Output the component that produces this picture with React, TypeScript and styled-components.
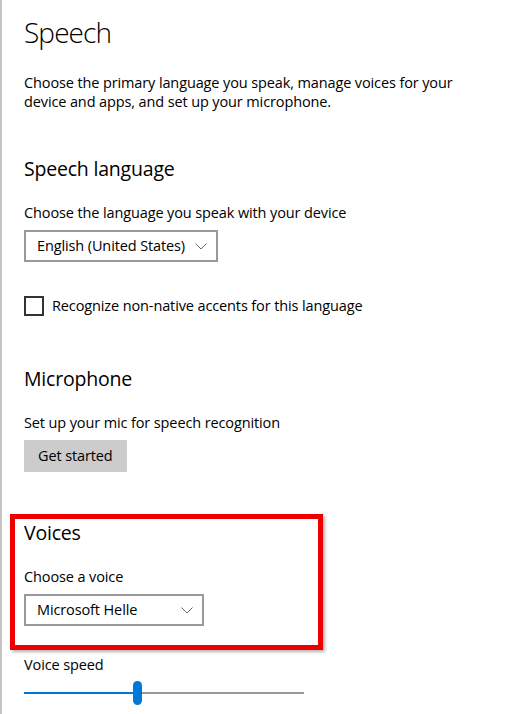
import React from "react";
import styled, { createGlobalStyle } from "styled-components";

const Global = createGlobalStyle`
  html, body {
    margin: 0;
    padding: 0;
    background: #ffffff;
  }
  body {
    font-family: "Open Sans", "Noto Sans", "Liberation Sans", sans-serif;
    color: #000000;
  }
`;

const Page = styled.div`
  box-sizing: border-box;
  min-height: 714px;
  border-left: 2px solid #c4c4c4;
  padding: 14px 0 0 22px;
  display: flex;
  flex-direction: column;
  align-items: flex-start;
`;

const Title = styled.h1`
  margin: 0;
  font-size: 28px;
  line-height: 36px;
  font-weight: 300;
  letter-spacing: -0.9px;
`;

const Text = styled.p<{ $mt: number }>`
  margin: ${(p) => p.$mt}px 0 0 0;
  font-size: 14.5px;
  letter-spacing: -0.12px;
  line-height: 19px;
  font-weight: 400;
`;

const Description = styled(Text)`
  max-width: 450px;
`;

const Heading = styled.h2<{ $mt: number }>`
  margin: ${(p) => p.$mt}px 0 0 0;
  font-size: 19.5px;
  letter-spacing: -0.2px;
  line-height: 28px;
  font-weight: 400;
`;

const Select = styled.div<{ $mt: number }>`
  box-sizing: border-box;
  margin-top: ${(p) => p.$mt}px;
  min-width: 180px;
  height: 32px;
  border: 2px solid #999999;
  padding: 0 9px 0 11px;
  display: inline-flex;
  align-items: center;
  justify-content: space-between;
  gap: 10px;
  font-size: 14.5px;
  letter-spacing: -0.12px;
  line-height: 20px;
  background: #ffffff;
`;

const Chevron = () => (
  <svg width="12" height="7" viewBox="0 0 12 7" fill="none">
    <path d="M0.5 0.5 L6 6 L11.5 0.5" stroke="#6b6b6b" strokeWidth="1" />
  </svg>
);

const CheckRow = styled.label<{ $mt: number }>`
  margin-top: ${(p) => p.$mt}px;
  display: flex;
  align-items: center;
  gap: 8px;
  font-size: 14.5px;
  letter-spacing: -0.12px;
  line-height: 20px;
`;

const Box = styled.span`
  box-sizing: border-box;
  width: 20px;
  height: 20px;
  border: 2px solid #333333;
  background: #ffffff;
`;

const Button = styled.button<{ $mt: number }>`
  margin-top: ${(p) => p.$mt}px;
  height: 32px;
  padding: 0 14px;
  border: none;
  background: #cccccc;
  font-family: inherit;
  font-size: 14.5px;
  letter-spacing: -0.12px;
  line-height: 20px;
  color: #000000;
`;

const Group = styled.div<{ $mt: number }>`
  position: relative;
  margin-top: ${(p) => p.$mt}px;
  display: flex;
  flex-direction: column;
  align-items: flex-start;
`;

const Highlight = styled.div`
  position: absolute;
  top: -5px;
  left: -14px;
  width: 313px;
  height: 136px;
  box-sizing: border-box;
  border: 5px solid #ee0000;
  box-shadow: 2px 2px 3px rgba(0, 0, 0, 0.3);
  pointer-events: none;
`;

const Slider = styled.div<{ $mt: number }>`
  position: relative;
  margin-top: ${(p) => p.$mt}px;
  width: 280px;
  height: 24px;
  display: flex;
  align-items: center;
`;

const Track = styled.div`
  flex: 1;
  height: 2px;
  background: #999999;
`;

const Fill = styled.div`
  position: absolute;
  left: 0;
  top: 11px;
  height: 2px;
  background: #0078d7;
`;

const Thumb = styled.div`
  position: absolute;
  top: 0;
  width: 9px;
  height: 24px;
  margin-left: -4px;
  border-radius: 5px;
  background: #0078d7;
`;

export default function App() {
  const speed = 40.4;
  return (
    <>
      <Global />
      <Page>
        <Title>Speech</Title>
        <Description $mt={23}>
          Choose the primary language you speak, manage voices for your device and apps, and set up your microphone.
        </Description>

        <Heading $mt={44}>Speech language</Heading>
        <Text $mt={20}>Choose the language you speak with your device</Text>
        <Select $mt={8}>
          <span>English (United States)</span>
          <Chevron />
        </Select>
        <CheckRow $mt={34}>
          <Box />
          <span>Recognize non-native accents for this language</span>
        </CheckRow>

        <Heading $mt={49}>Microphone</Heading>
        <Text $mt={20}>Set up your mic for speech recognition</Text>
        <Button $mt={8}>Get started</Button>

        <Group $mt={47}>
          <Heading $mt={0}>Voices</Heading>
          <Text $mt={20}>Choose a voice</Text>
          <Select $mt={8}>
            <span>Microsoft Helle</span>
            <Chevron />
          </Select>
          <Highlight />
        </Group>

        <Text $mt={29}>Voice speed</Text>
        <Slider $mt={7}>
          <Track />
          <Fill style={{ width: `${speed}%` }} />
          <Thumb style={{ left: `${speed}%` }} />
        </Slider>
      </Page>
    </>
  );
}
